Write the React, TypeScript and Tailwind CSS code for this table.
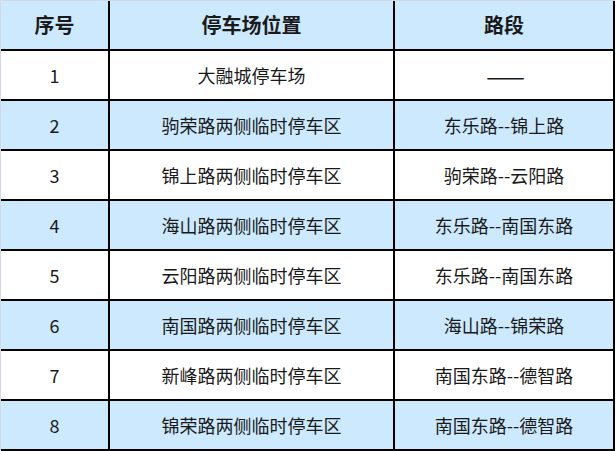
const rows = [
  ['1', '大融城停车场', '——'],
  ['2', '驹荣路两侧临时停车区', '东乐路--锦上路'],
  ['3', '锦上路两侧临时停车区', '驹荣路--云阳路'],
  ['4', '海山路两侧临时停车区', '东乐路--南国东路'],
  ['5', '云阳路两侧临时停车区', '东乐路--南国东路'],
  ['6', '南国路两侧临时停车区', '海山路--锦荣路'],
  ['7', '新峰路两侧临时停车区', '南国东路--德智路'],
  ['8', '锦荣路两侧临时停车区', '南国东路--德智路'],
]

const cell = 'flex items-center justify-center border-r-2 border-b-2 border-black'

export default function App() {
  return (
    <div
      className="w-[616px] h-[451px] bg-white text-[#1a1a1a]"
      style={{ fontFamily: '"Noto Sans CJK SC", "Noto Sans", sans-serif' }}
    >
      <div className="w-[615px] border-l border-t border-[#d3d9e4] grid grid-cols-[109px_285px_220px]">
        <div className={`${cell} h-[50px] bg-[#cce9fe] text-[20px] font-bold`}>序号</div>
        <div className={`${cell} h-[50px] bg-[#cce9fe] text-[20px] font-bold`}>停车场位置</div>
        <div className={`${cell} h-[50px] bg-[#cce9fe] text-[20px] font-bold`}>路段</div>
        {rows.map((r, i) => {
          const bg = i % 2 === 1 ? 'bg-[#cce9fe]' : 'bg-white'
          return (
            <>
              <div key={r[0] + 'a'} className={`${cell} h-[50px] ${bg} text-[18px]`}>{r[0]}</div>
              <div key={r[0] + 'b'} className={`${cell} h-[50px] ${bg} text-[18px]`}>{r[1]}</div>
              <div key={r[0] + 'c'} className={`${cell} h-[50px] ${bg} text-[18px]`}>
                {r[2] === '——' ? <span className="text-[23px] pl-[3px]">——</span> : r[2]}
              </div>
            </>
          )
        })}
      </div>
    </div>
  )
}
